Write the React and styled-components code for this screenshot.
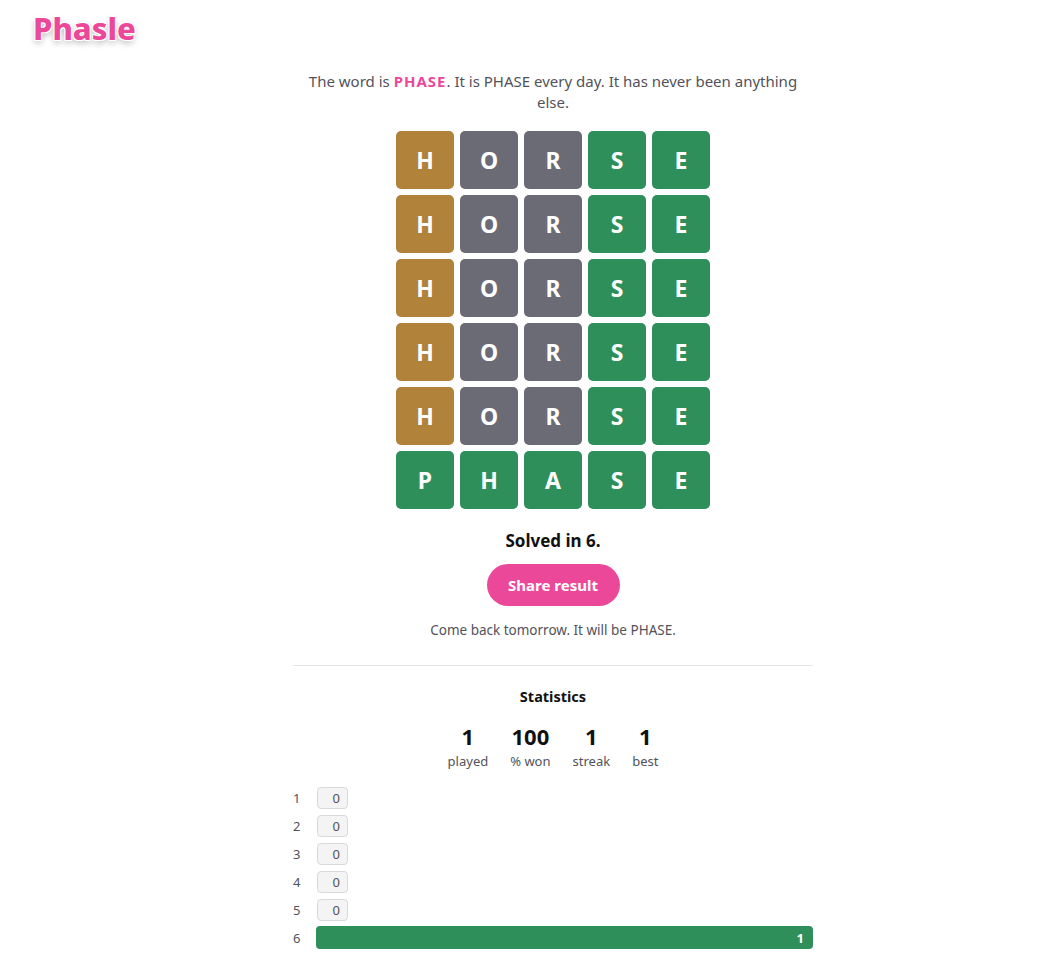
import React from 'react';
import styled, { createGlobalStyle } from 'styled-components';

const PINK = '#ec4899';
const GREEN = '#2e8f5b';
const YELLOW = '#b0823a';
const GRAY = '#6b6b76';
const TEXT_MUTED = '#52525b';

const GlobalStyle = createGlobalStyle`
  body {
    margin: 0;
    background: #fff;
    font-family: "Noto Sans", "Open Sans", sans-serif;
    color: #111;
  }
`;

// [ Styled Components >>>>>>>
const Header = styled.header`
  padding: 8px 0 0 33px;
  height: 40px;
`;

const Logo = styled.h1`
  margin: 0;
  font-size: 31px;
  font-weight: 800;
  line-height: 40px;
  color: ${PINK};
  letter-spacing: 0;
  text-shadow: 1px 1px 0 #fff, -1px -1px 0 #fff, 1px -1px 0 #fff,
    -1px 1px 0 #fff, 0 3px 6px rgba(0, 0, 0, 0.3);
`;

const Main = styled.main`
  width: 520px;
  margin: 0 auto;
  padding-left: 55px;
  display: flex;
  flex-direction: column;
  align-items: center;
`;

const Intro = styled.p`
  margin: 23px 0 0;
  width: 500px;
  text-align: center;
  font-size: 15px;
  line-height: 21px;
  color: ${TEXT_MUTED};
`;

const Word = styled.span`
  color: ${PINK};
  font-weight: 700;
  letter-spacing: 1px;
`;

const Board = styled.div`
  margin-top: 18px;
  display: grid;
  grid-template-columns: repeat(5, 58px);
  grid-auto-rows: 58px;
  gap: 6px;
`;

const tileColors = { c: GREEN, p: YELLOW, a: GRAY };

const Tile = styled.div`
  display: flex;
  align-items: center;
  justify-content: center;
  border-radius: 5px;
  background: ${p => tileColors[p.$state]};
  color: #fff;
  font-size: 23px;
  font-weight: 700;
`;

const Solved = styled.div`
  margin-top: 20px;
  font-size: 17px;
  font-weight: 700;
  color: #111;
`;

const ShareButton = styled.button`
  margin-top: 12px;
  width: 133px;
  height: 42px;
  border: none;
  border-radius: 21px;
  background: ${PINK};
  color: #fff;
  font-family: inherit;
  font-size: 15px;
  font-weight: 700;
  cursor: pointer;
`;

const Comeback = styled.p`
  margin: 15px 0 0;
  font-size: 13.5px;
  color: ${TEXT_MUTED};
`;

const Divider = styled.hr`
  align-self: stretch;
  margin: 26px 0 0;
  border: none;
  border-top: 1px solid #e4e4e7;
`;

const StatsTitle = styled.h2`
  margin: 20px 0 0;
  font-size: 14.5px;
  font-weight: 700;
  color: #111;
`;

const StatsRow = styled.div`
  margin-top: 17px;
  display: flex;
  gap: 22px;
`;

const Stat = styled.div`
  display: flex;
  flex-direction: column;
  align-items: center;
  gap: 3px;
`;

const StatValue = styled.span`
  font-size: 22px;
  font-weight: 700;
  line-height: 26px;
  color: #111;
`;

const StatLabel = styled.span`
  font-size: 13px;
  line-height: 18px;
  color: ${TEXT_MUTED};
`;

const Distribution = styled.div`
  align-self: stretch;
  margin-top: 16px;
  display: flex;
  flex-direction: column;
  gap: 5px;
`;

const DistRow = styled.div`
  display: flex;
  align-items: center;
  height: 23px;
`;

const DistLabel = styled.span`
  width: 24px;
  font-size: 13px;
  color: ${TEXT_MUTED};
`;

const Bar = styled.div`
  height: ${p => (p.$win ? 23 : 22)}px;
  box-sizing: border-box;
  border-radius: 4px;
  display: flex;
  align-items: center;
  justify-content: flex-end;
  padding-right: ${p => (p.$win ? 9 : 7)}px;
  font-size: 13px;
  background: ${p => (p.$win ? GREEN : '#f4f4f5')};
  border: ${p => (p.$win ? 'none' : '1px solid #d9d9dd')};
  color: ${p => (p.$win ? '#fff' : TEXT_MUTED)};
  font-weight: ${p => (p.$win ? 700 : 400)};
  flex: ${p => (p.$win ? 1 : 'none')};
  width: ${p => (p.$win ? 'auto' : '31px')};
  margin-left: ${p => (p.$win ? -1 : 0)}px;
`;
// <<<<<<< Styled Components ]

const guesses = ['HORSE', 'HORSE', 'HORSE', 'HORSE', 'HORSE', 'PHASE'];

const stats = [
  ['1', 'played'],
  ['100', '% won'],
  ['1', 'streak'],
  ['1', 'best']
];

const dist = [0, 0, 0, 0, 0, 1];

const tileState = (row, col) => {
  if (row === 5) return 'c';
  if (col === 0) return 'p';
  return col < 3 ? 'a' : 'c';
};

export default function App() {
  return (
    <>
      <GlobalStyle />
      <Header>
        <Logo>Phasle</Logo>
      </Header>
      <Main>
        <Intro>
          The word is <Word>PHASE</Word>. It is PHASE every day. It has never
          been anything else.
        </Intro>
        <Board>
          {guesses.map((word, r) =>
            word.split('').map((ch, i) => (
              <Tile key={`${r}-${i}`} $state={tileState(r, i)}>
                {ch}
              </Tile>
            ))
          )}
        </Board>
        <Solved>Solved in 6.</Solved>
        <ShareButton>Share result</ShareButton>
        <Comeback>Come back tomorrow. It will be PHASE.</Comeback>
        <Divider />
        <StatsTitle>Statistics</StatsTitle>
        <StatsRow>
          {stats.map(([v, l]) => (
            <Stat key={l}>
              <StatValue>{v}</StatValue>
              <StatLabel>{l}</StatLabel>
            </Stat>
          ))}
        </StatsRow>
        <Distribution>
          {dist.map((n, i) => (
            <DistRow key={i}>
              <DistLabel>{i + 1}</DistLabel>
              <Bar $win={n > 0}>{n}</Bar>
            </DistRow>
          ))}
        </Distribution>
      </Main>
    </>
  );
}
